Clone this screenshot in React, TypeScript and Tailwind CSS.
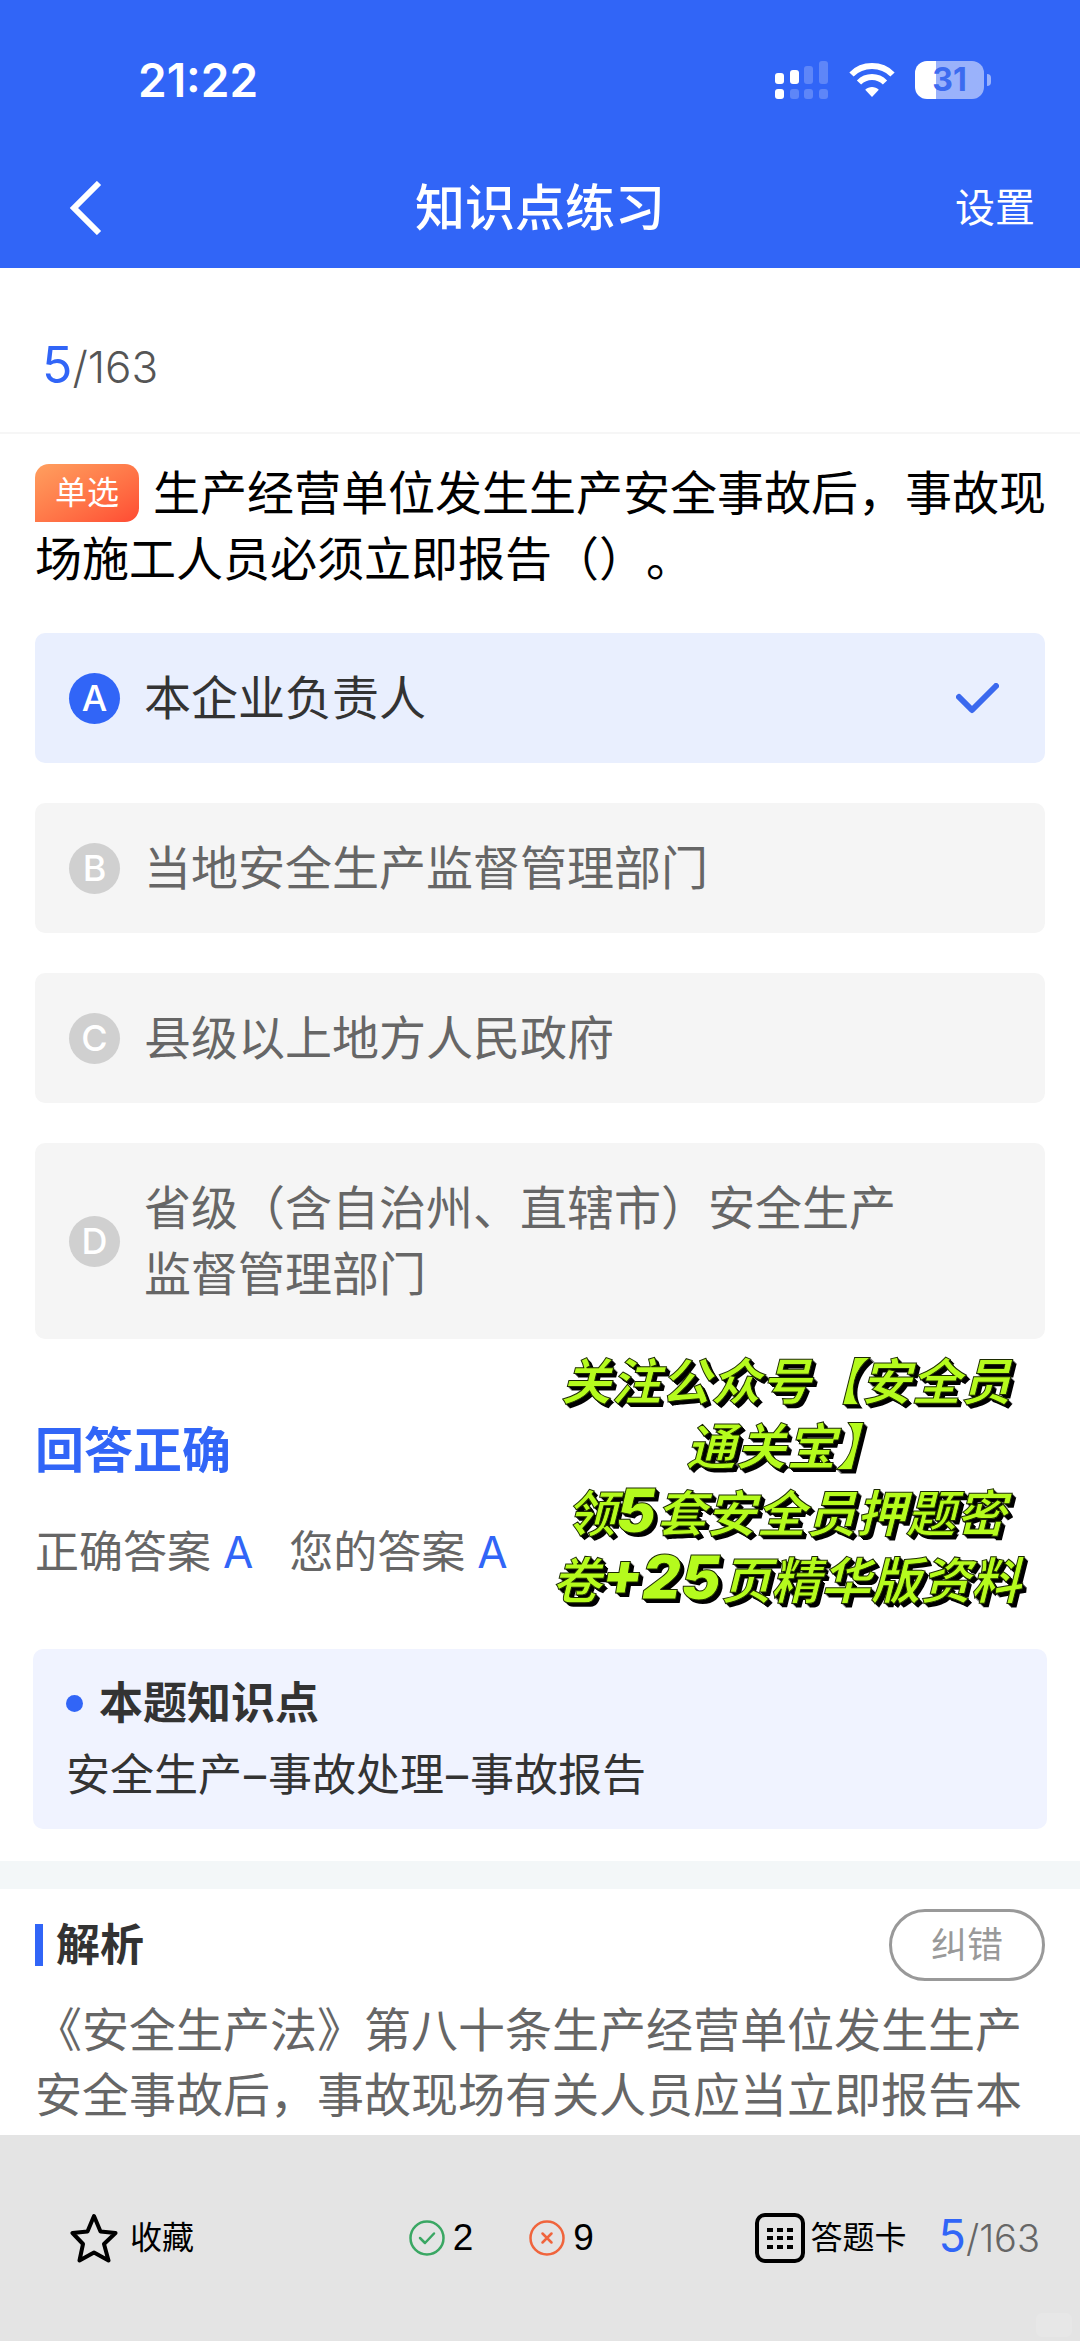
import { useState } from "react";

type Option = {
  key: string;
  text: string;
};

const options: Option[] = [
  { key: "A", text: "本企业负责人" },
  { key: "B", text: "当地安全生产监督管理部门" },
  { key: "C", text: "县级以上地方人民政府" },
  { key: "D", text: "省级（含自治州、直辖市）安全生产监督管理部门" },
];

function SignalIcon() {
  return (
    <svg width="54" height="38" viewBox="0 0 54 38" fill="#fff" aria-hidden="true">
      <rect x="0" y="12" width="9" height="11" rx="3" />
      <rect x="15" y="9" width="9" height="14" rx="3" />
      <rect x="0" y="28" width="9" height="10" rx="3" />
      <g fillOpacity="0.22">
        <rect x="29" y="5" width="9" height="18" rx="3" />
        <rect x="44" y="0" width="9" height="23" rx="3" />
        <rect x="15" y="28" width="9" height="10" rx="3" />
        <rect x="29" y="28" width="9" height="10" rx="3" />
        <rect x="44" y="28" width="9" height="10" rx="3" />
      </g>
    </svg>
  );
}

function WifiIcon() {
  return (
    <svg width="46" height="34" viewBox="0 0 46 34" fill="none" stroke="#fff" strokeWidth="6" aria-hidden="true">
      <path d="M2.5 11.5C13.5 0.3 32.5 0.3 43.5 11.5" />
      <path d="M10 19.5C17.3 12.2 28.7 12.2 36 19.5" />
      <path d="M23 34L16.2 26.8C20 23.2 26 23.2 29.8 26.8Z" fill="#fff" stroke="none" />
    </svg>
  );
}

function Battery() {
  return (
    <div className="flex items-center gap-[3px]">
      <div className="flex h-[38px] w-[69px] items-center justify-center rounded-[12px] bg-linear-to-r from-white from-30% to-[#9ab2fb] to-30% text-[32px] leading-none font-bold text-[#3c6bf0]">
        31
      </div>
      <div className="h-3 w-1 rounded-r-full bg-[#9ab2fb]" />
    </div>
  );
}

function Header() {
  return (
    <header className="bg-[#3165f7] text-white">
      <div className="flex h-[144px] items-center justify-between pt-4 pr-[89px] pl-[138px]">
        <span className="text-[46px] leading-none font-semibold">21:22</span>
        <div className="flex items-center gap-5">
          <SignalIcon />
          <WifiIcon />
          <Battery />
        </div>
      </div>
      <nav className="grid h-[124px] grid-cols-3 items-center px-[45px] pt-1" aria-label="页面导航">
        <button type="button" aria-label="返回" className="justify-self-start pl-6">
          <svg width="34" height="54" viewBox="0 0 34 54" fill="none" stroke="#fff" strokeWidth="6">
            <path d="M30 2L5 27L30 52" />
          </svg>
        </button>
        <h1 className="justify-self-center text-[50px] leading-[60px] font-medium whitespace-nowrap">知识点练习</h1>
        <button type="button" className="justify-self-end text-[40px] leading-[60px]">
          设置
        </button>
      </nav>
    </header>
  );
}

function OptionRow({
  option,
  selected,
  onSelect,
}: {
  option: Option;
  selected: boolean;
  onSelect: () => void;
}) {
  return (
    <label
      className={`relative flex items-center rounded-[10px] py-8 pr-[46px] pl-[34px] ${
        selected ? "bg-[#e9effe] text-[#333]" : "bg-[#f5f5f5] text-[#666]"
      }`}
    >
      <input type="radio" name="answer" value={option.key} checked={selected} onChange={onSelect} className="sr-only" />
      <span
        className={`flex size-[51px] shrink-0 items-center justify-center rounded-full text-[36px] leading-none font-medium text-white ${
          selected ? "bg-[#3165f7]" : "bg-[#d0d0d0]"
        }`}
      >
        {option.key}
      </span>
      <span className="ml-6 flex-1 text-[47px] leading-[66px]">{option.text}</span>
      <span className="ml-10 w-[43px] shrink-0">
        {selected && (
          <svg width="43" height="31" viewBox="0 0 43 31" fill="none" stroke="#3b69ee" strokeWidth="6" strokeLinecap="round" strokeLinejoin="round" aria-hidden="true">
            <path d="M3 14L16 27L40 3" />
          </svg>
        )}
      </span>
    </label>
  );
}

function Answer({ label, value }: { label: string; value: string }) {
  return (
    <div className="flex gap-3">
      <dt>{label}</dt>
      <dd className="text-[#3165f7]">{value}</dd>
    </div>
  );
}

function Promo() {
  return (
    <p className="absolute top-[11px] right-[34px] w-[520px] text-center text-[50px] leading-[65px] font-bold whitespace-nowrap text-[#b5fb1d] italic [-webkit-text-stroke:1px_#1c2b00] [text-shadow:1px_1px_0_#000,2px_2px_0_#000,3px_3px_0_#000,4px_4px_0_#000]">
      关注公众号【安全员
      <br />
      通关宝】
      <br />
      领<span className="text-[60px] leading-none font-black">5</span>套安全员押题密
      <br />
      卷<span className="text-[60px] leading-none font-black">+25</span>页精华版资料
    </p>
  );
}

function StarIcon() {
  return (
    <svg width="48" height="50" viewBox="0 0 48 50" fill="none" stroke="#000" strokeWidth="4" strokeLinejoin="round" aria-hidden="true">
      <path d="M24 3L30.500 18.500L45.500 20L34 31L38.500 47.500L24 39.500L9.500 47.500L13 31L2.500 20L17.500 18.500Z" />
    </svg>
  );
}

function RightIcon() {
  return (
    <svg width="36" height="36" viewBox="0 0 36 36" fill="none" stroke="#3aa763" strokeWidth="2.500" strokeLinecap="round" strokeLinejoin="round" aria-hidden="true">
      <circle cx="18" cy="18" r="16.500" />
      <path d="M11 18L16 23L25 13.500" />
    </svg>
  );
}

function WrongIcon() {
  return (
    <svg width="36" height="36" viewBox="0 0 36 36" fill="none" stroke="#f0643c" strokeWidth="2.500" strokeLinecap="round" aria-hidden="true">
      <circle cx="18" cy="18" r="16.500" />
      <path d="M13.500 13.500L22.500 22.500M22.500 13.500L13.500 22.500" />
    </svg>
  );
}

function CardIcon() {
  return (
    <svg width="50" height="50" viewBox="0 0 50 50" aria-hidden="true">
      <rect x="2" y="2" width="46" height="46" rx="8" fill="none" stroke="#000" strokeWidth="4" />
      {[17, 25, 34].map((y) =>
        [15, 25, 35].map((x) => <rect key={`${x}-${y}`} x={x - 3} y={y - 2} width="6" height="4" />),
      )}
    </svg>
  );
}

function Footer() {
  return (
    <footer className="relative flex items-center justify-between bg-[#e4e4e4] py-[78px] pr-10 pl-[70px] text-black">
      <button type="button" className="flex items-center gap-3 text-[32px] leading-[50px]">
        <StarIcon />
        收藏
      </button>
      <div className="flex items-center gap-14 pl-[54px] text-[37px] leading-[50px] font-[Liberation_Sans]">
        <span className="flex items-center gap-2">
          <RightIcon />2
        </span>
        <span className="flex items-center gap-2">
          <WrongIcon />9
        </span>
      </div>
      <div className="flex items-center gap-8">
        <button type="button" className="flex items-center gap-1.5 text-[32px] leading-[50px]">
          <CardIcon />
          答题卡
        </button>
        <p className="text-[38px] leading-[50px] font-light text-[#666]">
          <span className="text-[45px] leading-none font-normal text-[#3165f7]">5</span>/163
        </p>
      </div>
      <div className="absolute right-2 bottom-1 h-6 w-9 rounded-md bg-[#e7e7e7]" />
    </footer>
  );
}

export default function App() {
  const [selected, setSelected] = useState("A");

  return (
    <div
      lang="zh-CN"
      className="flex min-h-screen flex-col bg-white font-[Inter,'Noto_Sans_CJK_SC',sans-serif] [text-spacing-trim:space-all]"
    >
      <Header />
      <main className="flex-1">
        <p className="border-b-2 border-[#f6f6f6] px-[42px] pt-[69px] pb-[35px] text-[44px] leading-[60px] font-light text-[#555]">
          <span className="text-[50px] leading-none font-normal text-[#3165f7]">5</span>/163
        </p>

        <div role="radiogroup" aria-labelledby="question" className="px-[35px] pt-[26px]">
          <p id="question" className="-mr-2 text-[47px] leading-[65px] text-black">
            <span className="-mt-1 mr-[14px] mb-1 inline-flex h-[58px] w-[104px] items-center justify-center rounded-[14px] rounded-bl-none bg-linear-to-br from-[#ff9f5f] to-[#ff4a33] align-middle text-[32px] leading-none text-white">
              单选
            </span>
            生产经营单位发生生产安全事故后，事故现场施工人员必须立即报告（）。
          </p>
          <div className="mt-[42px] flex flex-col gap-10">
            {options.map((option) => (
              <OptionRow
                key={option.key}
                option={option}
                selected={selected === option.key}
                onSelect={() => setSelected(option.key)}
              />
            ))}
          </div>
        </div>

        <section className="relative px-[35px] pt-[82px]">
          <h2 className="text-[49px] leading-[60px] font-bold text-[#3165f7]">回答正确</h2>
          <dl className="mt-[41px] flex gap-9 text-[44px] leading-[60px] text-[#666]">
            <Answer label="正确答案" value="A" />
            <Answer label="您的答案" value="A" />
          </dl>
          <Promo />
        </section>

        <section className="mx-[33px] mt-[67px] mb-8 rounded-[10px] bg-[#f0f3ff] px-[33px] py-6 text-[44px] leading-[60px] text-[#333]">
          <h2 className="flex items-center gap-4 font-bold">
            <span className="size-[17px] rounded-full bg-[#3165f7]" />
            本题知识点
          </h2>
          <p className="mt-3">
            安全生产<span className="mx-0.5">–</span>事故处理<span className="mx-0.5">–</span>事故报告
          </p>
        </section>

        <section className="border-t-28 border-[#f3f7f8] px-[35px] pt-5 pb-2">
          <div className="flex items-center justify-between">
            <h2 className="flex items-center gap-[13px] text-[44px] leading-[60px] font-bold text-[#333]">
              <span className="h-[42px] w-2 bg-[#3165f7]" />
              解析
            </h2>
            <button type="button" className="h-[72px] w-[156px] rounded-full border-3 border-[#999] text-[36px] leading-none text-[#999]">
              纠错
            </button>
          </div>
          <p className="mt-4 text-[47px] leading-[65px] text-[#666]">
            《安全生产法》第八十条生产经营单位发生生产安全事故后，事故现场有关人员应当立即报告本
          </p>
        </section>
      </main>
      <Footer />
    </div>
  );
}
